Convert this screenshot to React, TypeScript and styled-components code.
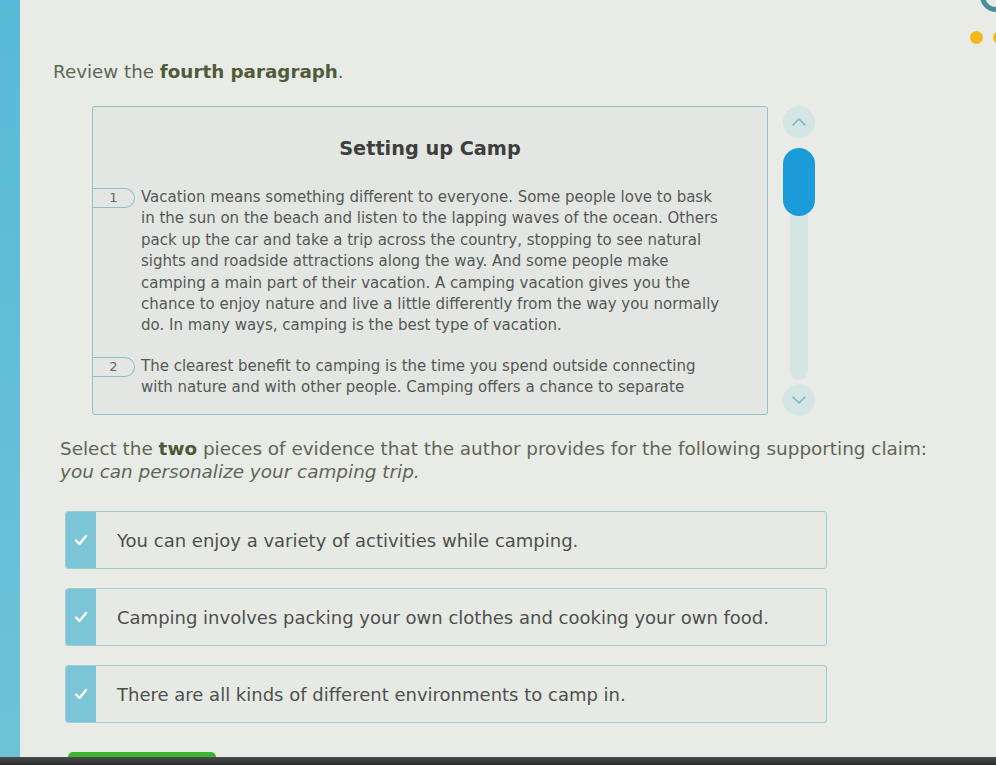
import React from 'react'
import styled, { createGlobalStyle } from 'styled-components'

const Global = createGlobalStyle`
  html, body { margin: 0; padding: 0; background: #e9ebe6; }
  body { font-family: "DejaVu Sans", Verdana, sans-serif; }
`

const Shell = styled.div`
  display: flex;
  flex-direction: column;
  height: 765px;
  width: 996px;
  overflow: hidden;
`

const Screen = styled.div`
  position: relative;
  display: flex;
  flex: 1;
  overflow: hidden;
  background: #e9ebe6;
`

const Side = styled.div`
  width: 20px;
  flex-shrink: 0;
  background: linear-gradient(180deg, #57bad6 0%, #6cc3d8 100%);
`

const Main = styled.div`
  flex: 1;
  padding: 61px 0 0 33px;
  display: flex;
  flex-direction: column;
`

const Heading = styled.div`
  font-size: 18.3px;
  line-height: 22px;
  color: #5e6754;
  b { color: #4f5c39; }
`

const PassageRow = styled.div`
  display: flex;
  gap: 15px;
  margin: 23px 0 0 39px;
`

const Passage = styled.div`
  width: 676px;
  height: 309px;
  box-sizing: border-box;
  border: 1px solid #8fc3c9;
  border-radius: 3px;
  background: #e3e6e2;
  overflow: hidden;
  padding-top: 30px;
`

const Title = styled.div`
  text-align: center;
  font-weight: bold;
  font-size: 19.3px;
  line-height: 24px;
  color: #3d3f3d;
  margin-bottom: 26px;
`

const Para = styled.div`
  display: flex;
  align-items: flex-start;
  gap: 6px;
  margin-bottom: 19px;
`

const Badge = styled.div`
  width: 42px;
  height: 20px;
  box-sizing: border-box;
  border: 1px solid #8fbfc6;
  border-left: none;
  border-radius: 0 11px 11px 0;
  font-size: 13px;
  line-height: 18px;
  text-align: center;
  color: #666;
  flex-shrink: 0;
  margin-top: 1px;
`

const ParaText = styled.div`
  font-size: 15px;
  line-height: 21.4px;
  color: #565856;
  white-space: nowrap;
`

const Scroll = styled.div`
  width: 32px;
  display: flex;
  flex-direction: column;
  align-items: center;
`

const ScrollBtn = styled.div`
  width: 32px;
  height: 32px;
  border-radius: 50%;
  background: #d3e5e5;
  display: flex;
  align-items: center;
  justify-content: center;
`

const Track = styled.div`
  width: 18px;
  height: 232px;
  margin: 10px 0 4px;
  border-radius: 9px;
  background: #d3e6e4;
  display: flex;
  flex-direction: column;
`

const Thumb = styled.div`
  width: 32px;
  height: 68px;
  margin-left: -7px;
  border-radius: 16px;
  background: #1b9bd8;
`

const Question = styled.div`
  margin: 21px 0 0 7px;
  font-size: 18.4px;
  line-height: 23px;
  color: #5f6657;
  b { color: #4d5838; }
  i { display: block; }
`

const Options = styled.div`
  display: flex;
  flex-direction: column;
  gap: 19px;
  margin: 28px 0 0 12px;
  width: 762px;
`

const Option = styled.div`
  display: flex;
  height: 58px;
  box-sizing: border-box;
  border: 1px solid #9fcdd6;
  border-radius: 3px;
  background: #e7e9e5;
  overflow: hidden;
`

const Check = styled.div`
  width: 30px;
  flex-shrink: 0;
  background: #7cc5d6;
  display: flex;
  align-items: center;
  justify-content: center;
`

const OptionText = styled.div`
  display: flex;
  align-items: center;
  padding-left: 21px;
  font-size: 18px;
  color: #4e504e;
`

const Submit = styled.div`
  margin: 29px 0 0 15px;
  width: 148px;
  height: 30px;
  border-radius: 8px 8px 0 0;
  background: #3cb531;
`

const Bezel = styled.div`
  height: 8px;
  background: linear-gradient(180deg, #4a4c4c, #2a2b2b);
`

const Corner = styled.div`
  position: absolute;
  top: -20px;
  right: -16px;
  display: flex;
  flex-direction: column;
  align-items: flex-end;
  gap: 19px;
`

const Ring = styled.div`
  width: 22px;
  height: 22px;
  border-radius: 50%;
  border: 5px solid #4b8d9a;
`

const Dots = styled.div`
  display: flex;
  gap: 10px;
  margin-right: 6px;
`

const Dot = styled.div`
  width: 13px;
  height: 13px;
  border-radius: 50%;
  background: #f1b91c;
`

const Tick = () => (
  <svg width="14" height="12" viewBox="0 0 14 12">
    <path d="M2 6.5 L5.5 10 L12 2" fill="none" stroke="#fff" strokeWidth="2.4" strokeLinecap="round" strokeLinejoin="round" />
  </svg>
)

const Chevron: React.FC<{ up?: boolean }> = ({ up }) => (
  <svg width="16" height="10" viewBox="0 0 16 10">
    <path d={up ? 'M2 8 L8 2 L14 8' : 'M2 2 L8 8 L14 2'} fill="none" stroke="#7fb8c4" strokeWidth="1.6" strokeLinecap="round" strokeLinejoin="round" />
  </svg>
)

const para1 = [
  'Vacation means something different to everyone. Some people love to bask',
  'in the sun on the beach and listen to the lapping waves of the ocean. Others',
  'pack up the car and take a trip across the country, stopping to see natural',
  'sights and roadside attractions along the way. And some people make',
  'camping a main part of their vacation. A camping vacation gives you the',
  'chance to enjoy nature and live a little differently from the way you normally',
  'do. In many ways, camping is the best type of vacation.',
]

const para2 = [
  'The clearest benefit to camping is the time you spend outside connecting',
  'with nature and with other people. Camping offers a chance to separate',
]

const choices = [
  'You can enjoy a variety of activities while camping.',
  'Camping involves packing your own clothes and cooking your own food.',
  'There are all kinds of different environments to camp in.',
]

const App: React.FC = () => {
  return (
    <Shell>
      <Global />
      <Screen>
        <Side />
        <Main>
          <Heading>
            Review the <b>fourth paragraph</b>.
          </Heading>
          <PassageRow>
            <Passage>
              <Title>Setting up Camp</Title>
              {[para1, para2].map((lines, i) => (
                <Para key={i}>
                  <Badge>{i + 1}</Badge>
                  <ParaText>
                    {lines.map((l) => (
                      <div key={l}>{l}</div>
                    ))}
                  </ParaText>
                </Para>
              ))}
            </Passage>
            <Scroll>
              <ScrollBtn>
                <Chevron up />
              </ScrollBtn>
              <Track>
                <Thumb />
              </Track>
              <ScrollBtn>
                <Chevron />
              </ScrollBtn>
            </Scroll>
          </PassageRow>
          <Question>
            Select the <b>two</b> pieces of evidence that the author provides for the following supporting claim:
            <i>you can personalize your camping trip.</i>
          </Question>
          <Options>
            {choices.map((c) => (
              <Option key={c}>
                <Check>
                  <Tick />
                </Check>
                <OptionText>{c}</OptionText>
              </Option>
            ))}
          </Options>
          <Submit />
        </Main>
        <Corner>
          <Ring />
          <Dots>
            <Dot />
            <Dot />
          </Dots>
        </Corner>
      </Screen>
      <Bezel />
    </Shell>
  )
}

export default App
